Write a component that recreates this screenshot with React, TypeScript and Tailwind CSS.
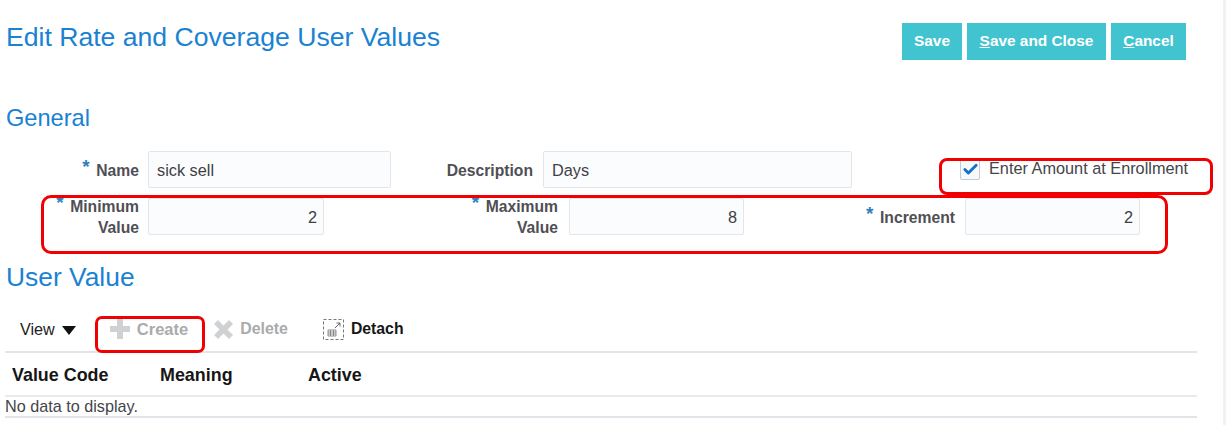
import React from 'react';
import { Check } from 'lucide-react';

const font = { fontFamily: '"Liberation Sans", Arial, sans-serif' };

const Req = () => <span className="absolute left-[-14px] top-[-3px] text-[19px] font-bold leading-none text-[#2f7fc1]">*</span>;

const Label: React.FC<{ width: string; required?: boolean; lines: string[] }> = ({ width, required, lines }) => (
  <div className={`${width} flex shrink-0 justify-end pt-[1px] text-right text-[15.7px] font-bold leading-[21px] text-[#4f4f55]`}>
    <div className="relative">
      {required && <Req />}
      {lines.map((line) => (
        <div key={line}>{line}</div>
      ))}
    </div>
  </div>
);

const Field: React.FC<{ width: string; value: string; number?: boolean }> = ({ width, value, number }) => (
  <div
    className={`${width} flex h-[37px] shrink-0 items-center rounded-[2px] border border-[#e2e5e9] bg-[#fbfcfe] pl-2 pr-[6px] pt-[1px] text-[16.3px] text-[#3f3f44] ${number ? 'justify-end' : ''}`}
  >
    {value}
  </div>
);

const Toolbar = () => (
  <div className="ml-[20px] mt-[24px] flex h-[28px] items-center text-[16.2px]">
    <span className="text-[#222]">View</span>
    <svg width="14" height="9" viewBox="0 0 14 9" className="ml-[7px] mt-[2px]">
      <path d="M0 0h14L7 9z" fill="#111" />
    </svg>
    <svg width="20" height="20" viewBox="0 0 20 20" className="ml-[34px]">
      <path d="M7 0h6v7h7v6h-7v7H7v-7H0V7h7z" fill="#cfd1d3" />
    </svg>
    <span className="ml-[7px] text-[16.5px] font-bold text-[#a9abad]">Create</span>
    <svg width="19" height="19" viewBox="0 0 19 19" className="ml-[26px]">
      <path d="M4 0l5.500 5.500L15 0l4 4-5.500 5.500L19 15l-4 4-5.500-5.500L4 19l-4-4 5.500-5.500L0 4z" fill="#cfd1d3" />
    </svg>
    <span className="ml-[7px] text-[15.9px] font-bold text-[#a9abad]">Delete</span>
    <svg width="21" height="21" viewBox="0 0 21 21" className="ml-[35px]" fill="none">
      <rect x="0.500" y="0.500" width="20" height="20" stroke="#777" strokeDasharray="3 2" />
      <path d="M12 9l5-5M13.500 4H17v3.500" stroke="#666" />
      <path d="M5 11h8v6H5zM5 13h8M5 15h8M7.500 11v6M10.500 11v6" stroke="#777" strokeWidth="0.8" />
    </svg>
    <span className="ml-[7px] text-[15.8px] font-bold text-[#161616]">Detach</span>
  </div>
);

const App: React.FC = () => {
  return (
    <div className="relative h-[425px] w-[1226px] overflow-hidden bg-white" style={font}>
      <div className="absolute bottom-0 right-0 top-0 w-[3px] bg-[#f1f2f3]" />

      <div className="flex h-[60px] items-start justify-between pl-[6px] pr-[40px] pt-[23px]">
        <h1 className="text-[26.6px] leading-[28px] text-[#1a82d2]">Edit Rate and Coverage User Values</h1>
        <div className="flex gap-[5px] text-[15.4px] font-bold text-white">
          <div className="flex h-[37px] w-[60px] items-center justify-center bg-[#41c4d0] pb-[1px]">Save</div>
          <div className="flex h-[37px] w-[139px] items-center justify-center bg-[#41c4d0] pb-[1px]">
            <span><u>S</u>ave and Close</span>
          </div>
          <div className="flex h-[37px] w-[75px] items-center justify-center bg-[#41c4d0] pb-[1px]">
            <span><u>C</u>ancel</span>
          </div>
        </div>
      </div>

      <h2 className="ml-[6px] mt-[44px] text-[23.6px] leading-[28px] text-[#1a82d2]">General</h2>

      <div className="mt-[19px] flex h-[37px] items-center">
        <Label width="w-[139px]" required lines={['Name']} />
        <div className="ml-[9px]"><Field width="w-[243px]" value="sick sell" /></div>
        <Label width="w-[142px]" lines={['Description']} />
        <div className="ml-[10px]"><Field width="w-[309px]" value="Days" /></div>
        <div className="ml-[108px] flex items-center self-start pt-[8px]">
          <div className="flex h-[21px] w-[20px] items-center justify-center rounded-[2px] border border-[#c5cbd2] bg-[#f7f9fb]">
            <Check className="h-[17px] w-[17px] text-[#0f72c9]" strokeWidth={4} />
          </div>
          <span className="ml-[9px] mt-[-3px] text-[16.3px] text-[#44444a]">Enter Amount at Enrollment</span>
        </div>
      </div>

      <div className="mt-[10px] flex h-[37px] items-center">
        <Label width="w-[139px]" required lines={['Minimum', 'Value']} />
        <div className="ml-[9px]"><Field width="w-[176px]" value="2" number /></div>
        <Label width="w-[234px]" required lines={['Maximum', 'Value']} />
        <div className="ml-[11px]"><Field width="w-[175px]" value="8" number /></div>
        <Label width="w-[211px]" required lines={['Increment']} />
        <div className="ml-[10px]"><Field width="w-[175px]" value="2" number /></div>
      </div>

      <h2 className="ml-[6px] mt-[28px] text-[26.4px] leading-[28px] text-[#1a82d2]">User Value</h2>

      <Toolbar />

      <div className="ml-[5px] mt-[8px] w-[1192px] border-t-2 border-[#e1e5ea]">
        <div className="flex h-[44px] items-center border-b-2 border-[#e8ebee] pl-[7px] pt-[2px] text-[17.9px] font-bold text-[#161616]">
          <span className="w-[148px]">Value Code</span>
          <span className="w-[148px]">Meaning</span>
          <span>Active</span>
        </div>
        <div className="flex h-[21px] items-center border-b-2 border-[#e1e5ea] text-[16.2px] text-[#44444a]">No data to display.</div>
      </div>

      {/* red callouts drawn over the screenshot */}
      <div className="absolute left-[939px] top-[158px] h-[37px] w-[274px] rounded-[8px] border-[3px] border-[#f00000]" />
      <div className="absolute left-[41px] top-[195px] h-[59px] w-[1127px] rounded-[10px] border-[3px] border-[#f00000]" />
      <div className="absolute left-[95px] top-[316px] h-[37px] w-[110px] rounded-[7px] border-[3px] border-[#f00000]" />
    </div>
  );
};

export default App;
